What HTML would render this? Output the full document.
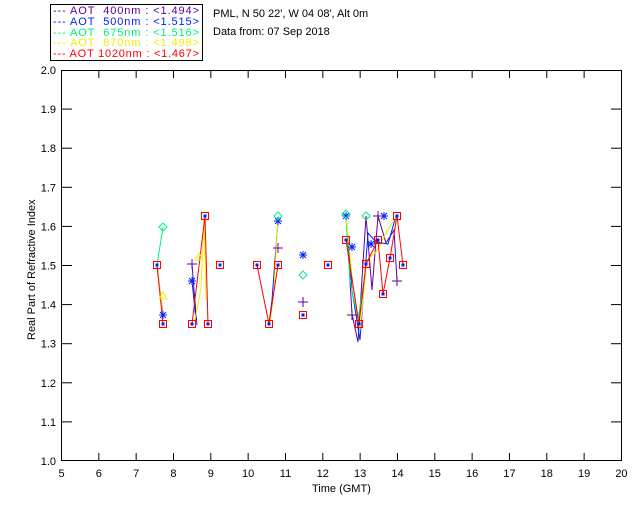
<!DOCTYPE html>
<html><head><meta charset="utf-8"><style>
body{margin:0;background:#fff;width:640px;height:512px;overflow:hidden}
svg{display:block}
text{font-family:"Liberation Sans",sans-serif;font-size:11px}
</style></head><body>
<svg id="s" width="640" height="512" xmlns="http://www.w3.org/2000/svg">
<rect x="50.5" y="4.5" width="152" height="56" fill="none" stroke="#000"/>
<g font-size="11.5">
<text x="53" y="14" fill="#6000a0" textLength="146" lengthAdjust="spacing">--- AOT&#160;&#160;400nm : &lt;1.494&gt;</text>
<text x="53" y="25" fill="#0020ff" textLength="146" lengthAdjust="spacing">--- AOT&#160;&#160;500nm : &lt;1.515&gt;</text>
<text x="53" y="36" fill="#00f080" textLength="146" lengthAdjust="spacing">--- AOT&#160;&#160;675nm : &lt;1.516&gt;</text>
<text x="53" y="46" fill="#f0f000" textLength="146" lengthAdjust="spacing">--- AOT&#160;&#160;870nm : &lt;1.498&gt;</text>
<text x="53" y="57" fill="#ff0000" textLength="146" lengthAdjust="spacing">--- AOT 1020nm : &lt;1.467&gt;</text>
</g>
<text x="213" y="17" fill="#000">PML, N 50 22', W 04 08', Alt 0m</text>
<text x="213" y="35" fill="#000">Data from: 07 Sep 2018</text>
<rect x="61.5" y="70.5" width="560" height="390" fill="none" stroke="#000"/>
<text x="312" y="492" fill="#000">Time (GMT)</text>
<text transform="translate(35,340) rotate(-90)" fill="#000">Real Part of Refractive Index</text>
<g id="ax"></g>
<g id="d"></g>
</svg>
<script>
var ns="http://www.w3.org/2000/svg",ax=document.getElementById('ax'),d=document.getElementById('d');
function el(t,a,p){var e=document.createElementNS(ns,t);for(var k in a)e.setAttribute(k,a[k]);(p||ax).appendChild(e);return e;}
for(var h=5;h<=20;h++){var x=61.5+(h-5)*37.33;
 if(h>5&&h<20){el('line',{x1:x,y1:461,x2:x,y2:453,stroke:'#000'});el('line',{x1:x,y1:70,x2:x,y2:78,stroke:'#000'});}
 var t=el('text',{x:x,y:477,'text-anchor':'middle',fill:'#000'});t.textContent=h;}
for(var i=0;i<=10;i++){var y=461-i*39.1;
 if(i>0&&i<10){el('line',{x1:61,y1:y,x2:72,y2:y,stroke:'#000'});el('line',{x1:622,y1:y,x2:611,y2:y,stroke:'#000'});}
 var t=el('text',{x:56,y:y+4,'text-anchor':'end',fill:'#000'});t.textContent=(1+i/10).toFixed(1);}
function line(pts,c){el('polyline',{points:pts.map(p=>p.join(',')).join(' '),fill:'none',stroke:c,'stroke-width':1},d);}
line([[157,265],[163,227]],'#00f080');
line([[157,265],[160,290],[163,316]],'#0020ff');
line([[157,265],[161,298],[163,324]],'#f0f000');
line([[192,264],[194,290],[197,325]],'#6000a0');
line([[192,281],[196,320]],'#0020ff');
line([[195,320],[201,288],[204,216],[206,300]],'#f0f000');
line([[269,324],[272,300],[278,221]],'#0020ff');
line([[270,324],[274,290],[278,216]],'#f0f000');
line([[346,214],[352,314],[358,342],[366,216],[372,290],[378,216],[386,243],[394,230],[397,281]],'#6000a0');
line([[346,216],[352,290],[360,340],[368,233],[376,242],[388,244],[396,216]],'#0020ff');
line([[346,218],[350,280],[358,320],[367,260],[376,252],[390,226],[397,216]],'#00f080');
line([[346,216],[353,285],[360,330],[367,260],[376,252],[390,226],[397,216]],'#f0f000');
[[[157,265],[163,324]],[[192,324],[205,216],[208,324]],[[257,265],[269,324],[278,265]],
 [[346,240],[359,324],[366,264],[378,240],[383,294],[390,258],[397,216],[403,265]]].forEach(g=>line(g,'#ff0000'));
[[157,265],[163,324],[192,324],[205,216],[208,324],[220,265],[257,265],[269,324],[278,265],[303,315],[328,265],[346,240],[359,324],[366,264],[378,240],[383,294],[390,258],[397,216],[403,265]].forEach(function(p){
 el('rect',{x:p[0]-3.5,y:p[1]-3.5,width:7,height:7,fill:'none',stroke:'#ff0000'},d);
 el('rect',{x:p[0]-1.5,y:p[1]-1.5,width:3,height:3,fill:'#0020ff'},d);});
[[303,255],[163,315],[192,281],[278,221],[346,216],[352,247],[371,244],[384,216]].forEach(function(p){
 el('path',{d:'M'+(p[0]-4)+' '+p[1]+'h8M'+p[0]+' '+(p[1]-4)+'v8M'+(p[0]-3)+' '+(p[1]-3)+'l6 6M'+(p[0]+3)+' '+(p[1]-3)+'l-6 6',stroke:'#0020ff'},d);});
[[303,302],[192,264],[278,248],[352,315],[378,216],[397,281]].forEach(function(p){
 el('path',{d:'M'+(p[0]-5)+' '+p[1]+'h10M'+p[0]+' '+(p[1]-5)+'v10',stroke:'#6000a0'},d);});
[[163,227],[303,275],[278,216],[346,214],[366,216]].forEach(function(p){
 el('path',{d:'M'+p[0]+' '+(p[1]-4)+'l4 4l-4 4l-4 -4z',fill:'none',stroke:'#00f080'},d);});
[[163,296],[199,257]].forEach(function(p){
 el('path',{d:'M'+p[0]+' '+(p[1]-4)+'l4 7h-8z',fill:'none',stroke:'#f0f000'},d);});
</script>
</body></html>
